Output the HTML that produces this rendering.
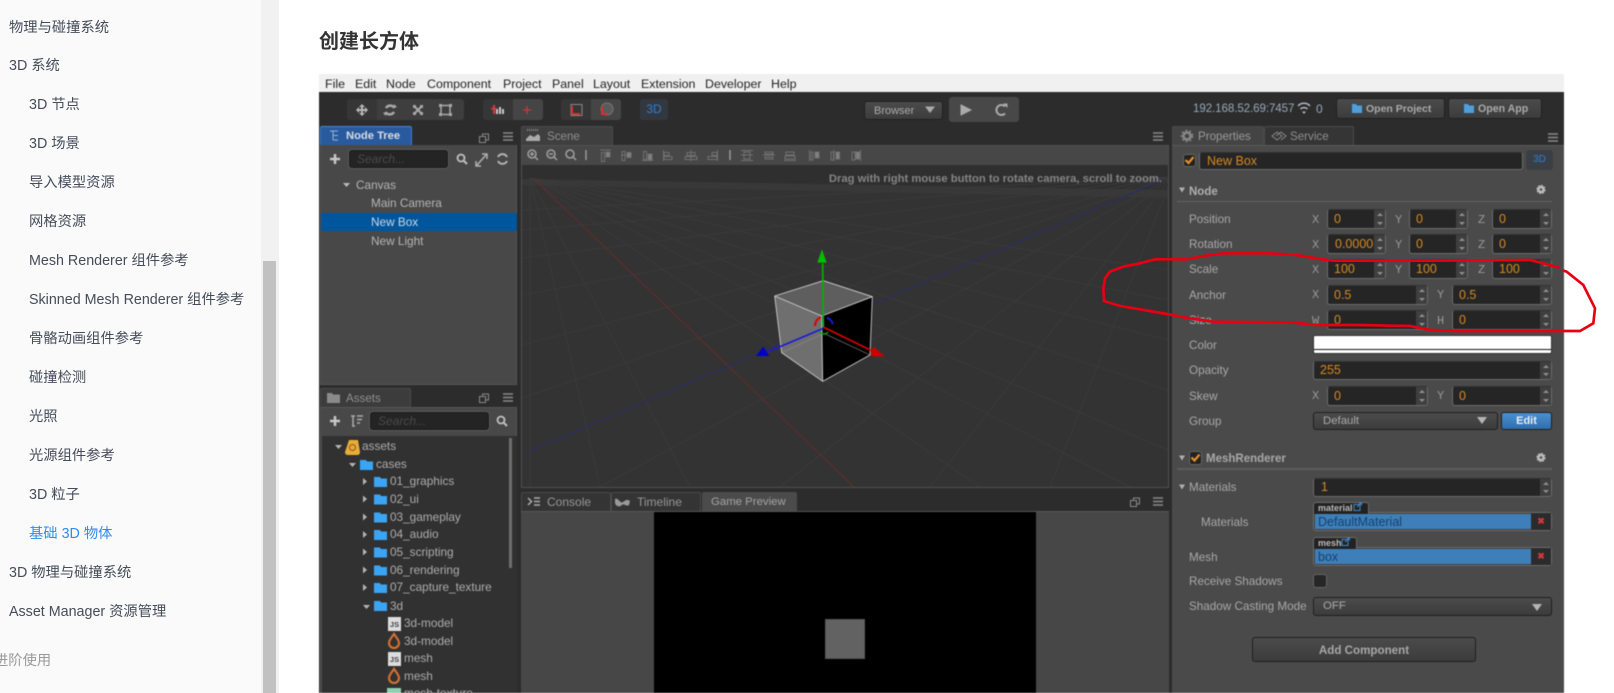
<!DOCTYPE html>
<html lang="zh"><head><meta charset="utf-8"><title>创建长方体</title>
<style>
html,body{margin:0;padding:0;width:1614px;height:693px;overflow:hidden;background:#fff}
body{position:relative;font-family:"Liberation Sans","Noto Sans CJK SC",sans-serif}
div,span{box-sizing:border-box}
.a{position:absolute}
.n{position:absolute;font-size:14.3px;line-height:20px;color:#454d5a;white-space:nowrap;left:29px;margin-top:1px}
.n0{left:9px}
.m{position:absolute;top:76px;font-size:12.4px;line-height:16px;color:#222;white-space:nowrap}
.t{position:absolute;font-size:11.8px;line-height:16px;color:#adadad;white-space:nowrap}
.p{position:absolute;left:1189px;font-size:11.7px;line-height:16px;color:#a8a8a8;white-space:nowrap;margin-top:1px}
.x{position:absolute;font:12px/16px "Liberation Mono",monospace;color:#979797}
.f{position:absolute;height:20px;background:#252525;border:1px solid #6b6b6b;border-top-color:#333;border-radius:3px;color:#d68a24;font-size:12.5px;line-height:18px;padding-left:6px;overflow:hidden;white-space:nowrap}
.f i{position:absolute;right:0;top:0;bottom:0;width:11px;background:#3f3f3f}
.f i:before,.f i:after{content:"";position:absolute;left:2.5px;border-left:3px solid transparent;border-right:3px solid transparent}
.f i:before{top:3px;border-bottom:3.5px solid #909090}
.f i:after{bottom:3px;border-top:3.5px solid #909090}
.tab{position:absolute;height:19px;background:#3c3c3c;border:1px solid #4a4a4a;border-bottom:0;border-radius:2px 2px 0 0;color:#9a9a9a;font-size:11.6px;line-height:19px;white-space:nowrap}
.btn{position:absolute;background:linear-gradient(#4b4b4b,#3c3c3c);border:1px solid #1f1f1f;border-radius:3px;color:#aaa;font-size:11.5px;font-weight:bold;text-align:center;white-space:nowrap}
.blue{position:absolute;left:1313px;width:239px;background:#3f3f3f;border:1px solid #6b6b6b;border-radius:0 3px 3px 3px}
.blue b{position:absolute;left:1px;top:1px;bottom:1px;width:217px;background:#3f7fb9;color:#15416e;font-weight:normal;font-size:12.5px;line-height:16px;padding-left:3px}
.blue u{position:absolute;right:0;top:0;bottom:0;width:20px;background:#2b2b2b;color:#d23a3a;font:bold 9px/17px "Liberation Sans",sans-serif;text-align:center;text-decoration:none}
.tg{position:absolute;left:1313px;height:12px;background:#222;border:1px solid #6b6b6b;border-bottom:0;border-radius:3px 3px 0 0;color:#bbb;font-size:9px;font-weight:bold;line-height:11px;padding-left:4px;white-space:nowrap}
#shot{position:absolute;left:0;top:0;width:1614px;height:693px;filter:blur(.4px)}
svg{position:absolute;left:0;top:0;overflow:hidden}
</style></head><body>

<!-- doc sidebar -->
<div class="a" style="left:0;top:0;width:261px;height:693px;background:#fafafa"></div>
<div class="a" style="left:261px;top:0;width:18px;height:693px;background:#f1f1f1"></div>
<div class="a" style="left:263px;top:261px;width:13px;height:432px;background:#c1c1c1"></div>
<div class="n n0" style="top:17px">物理与碰撞系统</div>
<div class="n n0" style="top:55px">3D 系统</div>
<div class="n" style="top:94px">3D 节点</div>
<div class="n" style="top:133px">3D 场景</div>
<div class="n" style="top:172px">导入模型资源</div>
<div class="n" style="top:211px">网格资源</div>
<div class="n" style="top:250px">Mesh Renderer 组件参考</div>
<div class="n" style="top:289px">Skinned Mesh Renderer 组件参考</div>
<div class="n" style="top:328px">骨骼动画组件参考</div>
<div class="n" style="top:367px">碰撞检测</div>
<div class="n" style="top:406px">光照</div>
<div class="n" style="top:445px">光源组件参考</div>
<div class="n" style="top:484px">3D 粒子</div>
<div class="n" style="top:523px;color:#2b8cf2">基础 3D 物体</div>
<div class="n n0" style="top:562px">3D 物理与碰撞系统</div>
<div class="n n0" style="top:601px">Asset Manager 资源管理</div>
<div class="n" style="top:650px;left:-6px;color:#999">进阶使用</div>

<div class="a" style="left:319px;top:28px;font-size:20px;line-height:28px;font-weight:bold;color:#333;white-space:nowrap">创建长方体</div>

<div id="shot">
<!-- frame -->
<div class="a" style="left:319px;top:74px;width:1245px;height:18px;background:#f0f0f0"></div>
<div class="a" style="left:319px;top:92px;width:1245px;height:601px;background:#2c2c2c"></div>
<div class="m" style="left:325px">File</div><div class="m" style="left:355px">Edit</div><div class="m" style="left:386px">Node</div><div class="m" style="left:427px">Component</div><div class="m" style="left:503px">Project</div><div class="m" style="left:552px">Panel</div><div class="m" style="left:593px">Layout</div><div class="m" style="left:641px">Extension</div><div class="m" style="left:705px">Developer</div><div class="m" style="left:771px">Help</div>

<!-- toolbar -->
<div class="a" style="left:347px;top:99px;width:117px;height:21px;background:#3e3e3e;border-radius:3px"></div>
<div class="a" style="left:347px;top:99px;width:30px;height:21px;background:#363636;border-radius:3px 0 0 3px"></div>
<div class="a" style="left:483px;top:99px;width:60px;height:21px;background:#363636;border-radius:3px"></div>
<div class="a" style="left:513px;top:99px;width:30px;height:21px;background:#454545;border-radius:0 3px 3px 0"></div>
<div class="a" style="left:561px;top:99px;width:60px;height:21px;background:#363636;border-radius:3px"></div>
<div class="a" style="left:591px;top:99px;width:30px;height:21px;background:#454545;border-radius:0 3px 3px 0"></div>
<div class="a" style="left:640px;top:99px;width:28px;height:21px;background:#333840;border-radius:3px;color:#2f7fd3;font-size:12px;line-height:21px;text-align:center">3D</div>
<div class="btn" style="left:864px;top:101px;width:79px;height:19px;font-weight:normal;font-size:11px;text-align:left;padding-left:9px;line-height:19px">Browser</div>
<div class="a" style="left:949px;top:97px;width:70px;height:25px;background:#484848;border-radius:3px"></div>
<div class="t" style="left:1193px;top:101px;color:#98a8b8;font-size:11.6px;letter-spacing:-.1px">192.168.52.69:7457</div>
<div class="t" style="left:1316px;top:101px;color:#98a8b8;font-size:12px">0</div>
<div class="btn" style="left:1336px;top:98px;width:109px;height:21px;line-height:20px;font-size:10.5px;text-align:left;padding-left:29px">Open Project</div>
<div class="btn" style="left:1448px;top:98px;width:94px;height:21px;line-height:20px;font-size:10.6px;text-align:left;padding-left:29px">Open App</div>

<!-- node tree -->
<div class="a" style="left:320px;top:145px;width:197px;height:240px;background:#484848;border:1px solid #555;border-top:0"></div>
<div class="tab" style="left:320px;top:126px;width:92px;background:#2a5a9e;border-color:#3a7bc8;border-top:1px solid #3f8ae0;color:#d6dde6;font-weight:bold;font-size:11.2px;padding-left:25px">Node Tree</div>
<div class="a" style="left:349px;top:150px;width:99px;height:18px;background:#242424;border:1px solid #1a1a1a;box-shadow:0 0 0 1px #5a5a5a;border-radius:3px;color:#4a4a4a;font:italic 12px/16px 'Liberation Sans',sans-serif;padding-left:7px">Search...</div>
<div class="t" style="left:356px;top:177px;color:#b5b5b5">Canvas</div>
<div class="t" style="left:371px;top:195px;color:#b5b5b5">Main Camera</div>
<div class="a" style="left:321px;top:213px;width:196px;height:18px;background:#00569c"></div>
<div class="t" style="left:371px;top:214px;color:#d0d8e0">New Box</div>
<div class="t" style="left:371px;top:233px;color:#b5b5b5">New Light</div>

<!-- assets -->
<div class="a" style="left:320px;top:407px;width:197px;height:286px;background:#484848;border:1px solid #555;border-bottom:0"></div>
<div class="a" style="left:322px;top:436px;width:195px;height:257px;background:#313131"></div>
<div class="a" style="left:509px;top:438px;width:3px;height:130px;background:#6e6e6e"></div>
<div class="tab" style="left:320px;top:388px;width:91px;padding-left:25px;color:#8f8f8f">Assets</div>
<div class="a" style="left:370px;top:412px;width:119px;height:18px;background:#242424;border:1px solid #1a1a1a;box-shadow:0 0 0 1px #5a5a5a;border-radius:3px;color:#4a4a4a;font:italic 12px/16px 'Liberation Sans',sans-serif;padding-left:7px">Search...</div>
<div class="t" style="left:362px;top:438px">assets</div>
<div class="t" style="left:376px;top:456px">cases</div>
<div class="t" style="left:390px;top:473px">01_graphics</div>
<div class="t" style="left:390px;top:491px">02_ui</div>
<div class="t" style="left:390px;top:509px">03_gameplay</div>
<div class="t" style="left:390px;top:526px">04_audio</div>
<div class="t" style="left:390px;top:544px">05_scripting</div>
<div class="t" style="left:390px;top:562px">06_rendering</div>
<div class="t" style="left:390px;top:579px">07_capture_texture</div>
<div class="t" style="left:390px;top:598px">3d</div>
<div class="t" style="left:404px;top:615px">3d-model</div>
<div class="t" style="left:404px;top:633px">3d-model</div>
<div class="t" style="left:404px;top:650px">mesh</div>
<div class="t" style="left:404px;top:668px">mesh</div>
<div class="t" style="left:404px;top:685px">mesh-texture</div>
<div class="a" style="left:388px;top:617px;width:13px;height:14px;background:#ddd;color:#444;font:bold 7.5px/16px 'Liberation Sans',sans-serif;text-align:center">JS</div>
<div class="a" style="left:388px;top:652px;width:13px;height:14px;background:#ddd;color:#444;font:bold 7.5px/16px 'Liberation Sans',sans-serif;text-align:center">JS</div>
<div class="a" style="left:387px;top:688px;width:14px;height:5px;background:#8fd0b0"></div>

<!-- scene -->
<div class="a" style="left:521px;top:145px;width:648px;height:343px;background:#474747;border:1px solid #505050"></div>
<div class="tab" style="left:521px;top:126px;width:92px;padding-left:25px;color:#8f8f8f;background:#3f3f3f">Scene</div>
<div class="a" style="left:522px;top:165px;width:646px;height:322px;background:#333"></div>

<!-- console / game -->
<div class="a" style="left:521px;top:511px;width:648px;height:182px;background:#474747;border-top:1px solid #555"></div>
<div class="tab" style="left:521px;top:492px;width:90px;padding-left:25px;color:#979797;background:#343434;font-size:12px;line-height:18px">Console</div>
<div class="tab" style="left:611px;top:492px;width:90px;padding-left:25px;color:#979797;background:#343434;font-size:12px;line-height:18px">Timeline</div>
<div class="tab" style="left:702px;top:492px;width:95px;padding-left:8px;color:#a5a5a5;background:#4b4b4b;font-size:11.4px">Game Preview</div>
<div class="a" style="left:654px;top:512px;width:382px;height:181px;background:#000"></div>
<div class="a" style="left:825px;top:619px;width:40px;height:40px;background:#626262;border:1px solid #555"></div>

<!-- properties -->
<div class="a" style="left:1172px;top:145px;width:392px;height:548px;background:#4a4a4a;border-top:1px solid #5a5a5a"></div>
<div class="tab" style="left:1172px;top:126px;width:92px;padding-left:25px;background:#444;color:#9a9a9a">Properties</div>
<div class="tab" style="left:1264px;top:126px;width:90px;padding-left:25px;background:#353535;color:#8f8f8f">Service</div>
<div class="a" style="left:1183px;top:154px;width:13px;height:13px;background:#222;border:1px solid #666;border-radius:3px"></div>
<div class="f" style="left:1199px;top:152px;width:324px;height:18px;line-height:16px;padding-left:7px;border-radius:3px">New Box</div>
<div class="a" style="left:1526px;top:150px;width:27px;height:20px;background:#3a3f46;border-radius:3px;color:#2f7fd3;font-size:10px;line-height:20px;text-align:center">3D</div>
<div class="p" style="top:183px;font-weight:bold;color:#b0b0b0;font-size:11.5px">Node</div>
<div class="a" style="left:1177px;top:201px;width:375px;height:1px;background:#626262"></div>

<div class="p" style="top:211px">Position</div>
<div class="x" style="left:1312px;top:212px">X</div><div class="f" style="left:1327px;top:209px;width:59px">0<i></i></div>
<div class="x" style="left:1395px;top:212px">Y</div><div class="f" style="left:1409px;top:209px;width:59px">0<i></i></div>
<div class="x" style="left:1478px;top:212px">Z</div><div class="f" style="left:1492px;top:209px;width:60px">0<i></i></div>

<div class="p" style="top:236px">Rotation</div>
<div class="x" style="left:1312px;top:237px">X</div><div class="f" style="left:1327px;top:234px;width:59px;padding-left:7px">0.0000<i></i></div>
<div class="x" style="left:1395px;top:237px">Y</div><div class="f" style="left:1409px;top:234px;width:59px">0<i></i></div>
<div class="x" style="left:1478px;top:237px">Z</div><div class="f" style="left:1492px;top:234px;width:60px">0<i></i></div>

<div class="p" style="top:261px">Scale</div>
<div class="x" style="left:1312px;top:262px">X</div><div class="f" style="left:1327px;top:259px;width:59px">100<i></i></div>
<div class="x" style="left:1395px;top:262px">Y</div><div class="f" style="left:1409px;top:259px;width:59px">100<i></i></div>
<div class="x" style="left:1478px;top:262px">Z</div><div class="f" style="left:1492px;top:259px;width:60px">100<i></i></div>

<div class="p" style="top:287px">Anchor</div>
<div class="x" style="left:1312px;top:287px">X</div><div class="f" style="left:1327px;top:285px;width:101px">0.5<i></i></div>
<div class="x" style="left:1437px;top:287px">Y</div><div class="f" style="left:1452px;top:285px;width:100px">0.5<i></i></div>

<div class="p" style="top:312px">Size</div>
<div class="x" style="left:1312px;top:313px">W</div><div class="f" style="left:1327px;top:310px;width:101px">0<i></i></div>
<div class="x" style="left:1437px;top:313px">H</div><div class="f" style="left:1452px;top:310px;width:100px">0<i></i></div>

<div class="p" style="top:337px">Color</div>
<div class="a" style="left:1313px;top:335px;width:239px;height:19px;background:#fff;border:1px solid #333;border-radius:2px"></div>
<div class="a" style="left:1314px;top:349px;width:237px;height:1px;background:#111"></div>

<div class="p" style="top:362px">Opacity</div>
<div class="f" style="left:1313px;top:361px;width:239px;height:19px;line-height:17px">255<i></i></div>

<div class="p" style="top:388px">Skew</div>
<div class="x" style="left:1312px;top:388px">X</div><div class="f" style="left:1327px;top:386px;width:101px">0<i></i></div>
<div class="x" style="left:1437px;top:388px">Y</div><div class="f" style="left:1452px;top:386px;width:100px">0<i></i></div>

<div class="p" style="top:413px">Group</div>
<div class="btn" style="left:1313px;top:412px;width:185px;height:18px;font-weight:normal;font-size:11.4px;line-height:16px;text-align:left;padding-left:9px">Default</div>
<div class="btn" style="left:1501px;top:412px;width:51px;height:18px;background:linear-gradient(#4a90d4,#2f6eaa);color:#e8eef5;line-height:16px;font-size:11px">Edit</div>

<div class="a" style="left:1189px;top:451px;width:13px;height:14px;background:#222;border:1px solid #666;border-radius:3px"></div>
<div class="p" style="left:1206px;top:450px;font-weight:bold;color:#a8a8a8;font-size:11.5px">MeshRenderer</div>
<div class="a" style="left:1177px;top:468px;width:375px;height:2px;background:#5c5c5c"></div>

<div class="p" style="top:479px">Materials</div>
<div class="f" style="left:1313px;top:478px;width:239px;height:19px;line-height:17px;padding-left:7px">1<i></i></div>

<div class="p" style="left:1201px;top:514px">Materials</div>
<div class="blue" style="top:512px;height:19px"><b>DefaultMaterial</b><u>✖</u></div>
<div class="tg" style="top:502px;width:56px">material</div>

<div class="p" style="top:549px">Mesh</div>
<div class="blue" style="top:547px;height:19px"><b>box</b><u>✖</u></div>
<div class="tg" style="top:537px;width:44px">mesh</div>

<div class="p" style="top:573px">Receive Shadows</div>
<div class="a" style="left:1313px;top:574px;width:14px;height:14px;background:#262626;border:1px solid #666;border-radius:3px"></div>

<div class="p" style="top:598px">Shadow Casting Mode</div>
<div class="btn" style="left:1313px;top:597px;width:239px;height:19px;font-weight:normal;font-size:11.4px;line-height:17px;text-align:left;padding-left:9px">OFF</div>

<div class="btn" style="left:1252px;top:637px;width:224px;height:25px;line-height:25px;font-size:11.6px;color:#a8a8a8">Add Component</div>

<!-- scene drawing + icons -->
<svg width="1614" height="693" viewBox="0 0 1614 693">
<defs><clipPath id="v"><rect x="522" y="165" width="646" height="322"/></clipPath></defs>
<g clip-path="url(#v)">
<path d="M522 165H1168V190L522 179Z" fill="#2f2f2f"/>
<path d="M522 179L1168 190V198L522 185Z" fill="#383838"/>
<g stroke="#3a3a3a" fill="none">
<path d="M530 178L530 487M530 178L600 487M530 178L690 487M530 178L980 487M530 178L1130 487M530 178L1168 450M530 178L1168 390M530 178L1168 340M530 178L1168 300M530 178L1168 270"/>
<path d="M1172 177L522 210M1172 177L522 230M1172 177L522 258M1172 177L522 295M1172 177L522 345M1172 177L522 398M1172 177L600 487M1172 177L780 487M1172 177L930 487M1172 177L1050 487"/>
</g>
<path d="M535 180L854 487" stroke="#6b2a2a" stroke-width="1" fill="none"/>
<path d="M525 453L1163 180" stroke="#2b2b70" stroke-width="1" fill="none"/>
</g>
<text x="1162" y="182" text-anchor="end" font-family="Liberation Sans" font-size="11.25" font-weight="bold" fill="#858585">Drag with right mouse button to rotate camera, scroll to zoom.</text>

<!-- cube -->
<g transform="translate(700 220) scale(.33333)">
<path d="M224 228L370 182 517 230 365 288Z" fill="#5e5e5e"/>
<path d="M224 228L365 288 368 484 245 398Z" fill="#6f6f6f"/>
<path d="M365 288L517 230 510 405 368 484Z" fill="#000"/>
<path d="M245 398L372 340 510 405" stroke="#8a8a8a" stroke-width="2" fill="none"/>
<path d="M224 228L370 182 517 230 365 288ZM224 228L245 398 368 484 510 405 517 230M365 288L368 484" stroke="#cfcfcf" stroke-width="2.6" fill="none" stroke-linejoin="round"/>
<path d="M345 318a26 26 0 0 1 18 -26" stroke="#e00000" stroke-width="6" fill="none"/>
<path d="M380 294a22 22 0 0 1 18 18" stroke="#1a1ae0" stroke-width="6" fill="none"/>
<path d="M358 334a16 16 0 0 0 26 2" stroke="#00b000" stroke-width="4" fill="none"/>
<path d="M370 322L368 130" stroke="#00b400" stroke-width="5"/>
<path d="M366 88L352 128H380Z" fill="#00c000"/>
<path d="M370 325L205 395" stroke="#1a1ad8" stroke-width="5"/>
<path d="M168 408L190 380 208 408Z" fill="#0000c8"/>
<path d="M372 322L515 392" stroke="#e00000" stroke-width="5"/>
<path d="M555 410L520 380 510 408Z" fill="#d00000"/>
</g>

<!-- main toolbar icons -->
<g fill="#b8b8b8">
<path d="M362 104l3 3h-2v2h2v-2l3 3-3 3v-2h-2v2h2l-3 3-3-3h2v-2h-2v2l-3-3 3-3v2h2v-2h-2z"/>
</g>
<g fill="none" stroke="#a8a8a8" stroke-width="2.600">
<path d="M386 108a5 5 0 0 1 8.500 0M394 112a5 5 0 0 1 -8.500 0"/>
</g>
<g fill="none" stroke="#a8a8a8" stroke-width="2">
<path d="M414 106l8 8M422 106l-8 8"/>
<rect x="441" y="105.500" width="9" height="9" stroke-width="1.500"/>
</g>
<g fill="#a8a8a8"><rect x="413" y="105" width="3" height="3"/><rect x="420" y="105" width="3" height="3"/><rect x="413" y="112" width="3" height="3"/><rect x="420" y="112" width="3" height="3"/><rect x="439" y="104" width="3" height="3"/><rect x="449" y="104" width="3" height="3"/><rect x="439" y="113" width="3" height="3"/><rect x="449" y="113" width="3" height="3"/><path d="M394 104l3 3-3 1zM386 116l-3-3 3-1z"/></g>
<path d="M493 107h2v7h-2zM496 109h2v5h-2zM499 107h2v7h-2zM502 109h2v5h-2z" fill="#ccc"/>
<path d="M493 105h2v9h-2zM491 108h6v1.500h-6z" fill="#d04040"/>
<path d="M527 106v8M523 110h8" stroke="#c83a3a" stroke-width="1.300"/>
<rect x="571" y="104.500" width="11" height="11" fill="none" stroke="#888"/>
<path d="M572 106v8h8" fill="none" stroke="#d83030" stroke-width="2"/>
<circle cx="607" cy="109" r="6" fill="#5a5a5a" stroke="#777" stroke-width="1"/>
<path d="M602 106v8h6" fill="none" stroke="#d83030" stroke-width="2"/>
<path d="M925 106.500h10l-5 6.500z" fill="#aaa"/>
<path d="M961 105l10 5-10 5z" fill="#aaa" stroke="#aaa"/>
<path d="M1005 106.500a5 5 0 1 0 0 7" fill="none" stroke="#aaa" stroke-width="2"/>
<path d="M1003 103.500h4.500v4.500z" fill="#aaa"/>
<path d="M1298 106a8 8 0 0 1 12 0M1300.500 109a5 5 0 0 1 7 0" fill="none" stroke="#b0b8c0" stroke-width="1.500"/>
<path d="M1304 114l-2 -2.500h4z" fill="#b0b8c0"/>
<path d="M1352 104h4l1 1.500h5v7.500h-10zM1464 104h4l1 1.500h5v7.500h-10z" fill="#4f9fdc"/>

<!-- panel headers -->
<g>
<path d="M330 131h8M333 131v9M333 135.500h5M333 140h5" stroke="#9ab4d0" fill="none"/>
<path d="M526 139l4 -4 4 2 4 -3 2 2v5h-14z" fill="#aaa"/>
<path d="M527 130h12" stroke="#888" stroke-dasharray="1 1" stroke-width="2"/>
<path d="M327 393h5l1 1.500h7v8.500h-13z" fill="#8a8a8a"/>
<circle cx="1187" cy="136" r="3.500" fill="none" stroke="#888" stroke-width="2.500"/>
<circle cx="1187" cy="136" r="5.500" fill="none" stroke="#888" stroke-width="1.500" stroke-dasharray="2 2"/>
<path d="M1272 136l5 -4 5 4 -5 4zM1276 136l5 -4 5 4 -5 4" fill="none" stroke="#888"/>
<path d="M528 498l3.500 3.500-3.500 3.500M534 498h6M534 501.500h6M534 505h6" fill="none" stroke="#aaa" stroke-width="1.500"/>
<path d="M615 499c3-2 5 5 8 3s4-3 7-1l-1 4c-3 2-5-2-7 0s-6 2-7-2z" fill="#999"/>
</g>
<g fill="none" stroke="#8a8a8a">
<path d="M479.500 136.500h6v6h-6zM482.500 136.500v-2.500h6v6h-3"/>
<path d="M479.500 396.500h6v6h-6zM482.500 396.500v-2.500h6v6h-3"/>
<path d="M1130.500 500.500h6v6h-6zM1133.500 500.500v-2.500h6v6h-3"/>
<path d="M503 133h10M503 136.500h10M503 140h10" stroke-width="1.500"/>
<path d="M503 394h10M503 397.500h10M503 401h10" stroke-width="1.500"/>
<path d="M1153 133h10M1153 136.500h10M1153 140h10" stroke-width="1.500"/>
<path d="M1153 498h10M1153 501.500h10M1153 505h10" stroke-width="1.500"/>
<path d="M1548 134h10M1548 137.500h10M1548 141h10" stroke-width="1.500"/>
</g>

<!-- node tree tools -->
<path d="M335 154v10M330 159h10" stroke="#c8c8c8" stroke-width="2.500"/>
<circle cx="461" cy="158" r="3.500" fill="none" stroke="#c0c0c0" stroke-width="1.800"/><path d="M464 161l3 3" stroke="#c0c0c0" stroke-width="2"/>
<path d="M477 165l9-10M482 154h5v5M476 161v5h5" fill="none" stroke="#b0b0b0" stroke-width="1.500"/>
<path d="M498 157a5 5 0 0 1 9 0M507 161a5 5 0 0 1 -9 0" fill="none" stroke="#b5b5b5" stroke-width="2"/>
<path d="M343 183h7l-3.500 4z" fill="#bbb"/>

<!-- assets tools -->
<path d="M335 416v10M330 421h10" stroke="#c8c8c8" stroke-width="2.500"/>
<path d="M353 416v10M351 416h4M352 426h3M357 416h6M357 419.500h5M357 423h3" stroke="#aaa" stroke-width="1.500" fill="none"/>
<circle cx="501" cy="420" r="3.500" fill="none" stroke="#c0c0c0" stroke-width="1.800"/><path d="M504 423l3 3" stroke="#c0c0c0" stroke-width="2"/>

<!-- tree arrows and folders -->
<path d="M335 445h7l-3.500 4zM349 463h7l-3.500 4zM363 605h7l-3.500 4z" fill="#b5b5b5"/>
<path d="M363 478v7l4-3.500zM363 495.500v7l4-3.500zM363 513.500v7l4-3.500zM363 531v7l4-3.500zM363 548.500v7l4-3.500zM363 566.500v7l4-3.500zM363 584v7l4-3.500z" fill="#b5b5b5"/>
<path d="M348 440h9l2 12q0 3-3 3h-9q-3 0-3-3z" fill="#e8ac3a" transform="translate(1 0)"/>
<circle cx="352.500" cy="447.500" r="3" fill="none" stroke="#a06a10" stroke-width="1.300"/>
<g fill="#3ba5f5">
<path d="M360 460h6l1 1.500h6v8.500h-13z"/>
<path d="M374 477h6l1 1.500h6v8.500h-13z"/>
<path d="M374 494.500h6l1 1.500h6v8.500h-13z"/>
<path d="M374 512.500h6l1 1.500h6v8.500h-13z"/>
<path d="M374 530h6l1 1.500h6v8.500h-13z"/>
<path d="M374 547.500h6l1 1.500h6v8.500h-13z"/>
<path d="M374 565.500h6l1 1.500h6v8.500h-13z"/>
<path d="M374 583h6l1 1.500h6v8.500h-13z"/>
<path d="M374 601h6l1 1.500h6v8.500h-13z"/>
</g>
<path d="M394 634c2 3 5 6 5 9a5 5 0 0 1-10 0c0-3 3-6 5-9z" fill="none" stroke="#d07030" stroke-width="2.200"/>
<path d="M394 669c2 3 5 6 5 9a5 5 0 0 1-10 0c0-3 3-6 5-9z" fill="none" stroke="#d07030" stroke-width="2.200"/>

<!-- scene toolbar icons -->
<g fill="none" stroke="#a0a0a0" stroke-width="1.500">
<circle cx="532" cy="154" r="4"/><path d="M535 157l3 3M530 154h4M532 152v4"/>
<circle cx="551" cy="154" r="4"/><path d="M554 157l3 3M549 154h4"/>
<circle cx="570" cy="154" r="4"/><path d="M573 157l3 3"/>
</g>
<path d="M586 150v10M730 150v10" stroke="#999" stroke-width="1.500"/>
<g fill="none" stroke="#707070">
<path d="M600 150h11M601.500 152.500h3v9h-3z"/><rect x="606" y="152" width="4" height="5" fill="#808080"/>
<path d="M621 155h11M622 151.500h3v9h-3z"/><rect x="627" y="152.500" width="4" height="5" fill="#808080"/>
<path d="M642 160.500h11M643.500 151.500h3v8h-3z"/><rect x="648" y="154" width="4" height="6" fill="#808080"/>
<path d="M663.500 150v11M664 152.500h5v3h-5zM664 156.500h8v3h-8z"/>
<path d="M691 150v11M687 152.500h8v3h-8zM685 156.500h12v3h-12z"/>
<path d="M717.500 150v11M712 152.500h5v3h-5zM708 156.500h9v3h-9z"/>
<path d="M741 150.500h12M741 155h12M741 160.500h12M744 152h6v7h-6z"/>
<path d="M763 155h12M765 152h8v2h-8zM765 157h8v2h-8z"/>
<path d="M784 160.500h12M786 152h8v3h-8zM785 156h10v3h-10z"/>
<path d="M809.500 150v11M811 152h2v8h-2z"/><rect x="815" y="152" width="4" height="6" fill="#808080"/>
<path d="M834 150v11M831 152h2.500v8H831z"/><rect x="836" y="152" width="3.500" height="7" fill="#808080"/>
<path d="M860.500 150v11M852 152h3v8h-3z"/><rect x="856" y="152" width="3.500" height="7" fill="#808080"/>
</g>

<!-- property icons -->
<path d="M1185.500 160l3 3 5-6" fill="none" stroke="#e8902a" stroke-width="2.200"/>
<path d="M1191.500 457.500l3 3 5-6" fill="none" stroke="#e8902a" stroke-width="2.200"/>
<path d="M1179 187.500h6l-3 5zM1179 455.500h6l-3 5zM1179 484.500h6l-3 5z" fill="#b0b0b0"/>
<circle cx="1541" cy="189.500" r="2.500" fill="none" stroke="#bbb" stroke-width="2.500"/>
<circle cx="1541" cy="189.500" r="4" fill="none" stroke="#bbb" stroke-width="1.200" stroke-dasharray="2 1.100"/>
<circle cx="1541" cy="457.500" r="2.500" fill="none" stroke="#bbb" stroke-width="2.500"/>
<circle cx="1541" cy="457.500" r="4" fill="none" stroke="#bbb" stroke-width="1.200" stroke-dasharray="2 1.100"/>
<path d="M1477 417h10l-5 7zM1532 604h10l-5 7z" fill="#b5b5b5"/>
<path d="M1354 504.500h6v6h-6zM1357 507l4-4M1359 503h2.500v2.500M1342 539.500h6v6h-6zM1345 542l4-4M1347 538h2.500v2.500" fill="none" stroke="#3f8ad0"/>
</svg>
</div>

<!-- red annotation -->
<svg width="1614" height="693" viewBox="0 0 1614 693">
<g transform="translate(1090 245) scale(.33333)">
<path d="M1410 68L1370 58 1320 45 1000 47 730 47 690 42 620 30 540 25 400 25 340 33 290 43 195 43 150 55 100 65 60 80 45 100 40 130 42 168 90 183 150 193 230 207 300 220 370 230 600 232 680 240 800 240 960 243 1020 255 1100 258 1470 258 1510 235 1515 190 1495 150 1480 120 1430 80 1418 76" fill="none" stroke="#e60012" stroke-width="8"/>
</g>
</svg>
</body></html>
